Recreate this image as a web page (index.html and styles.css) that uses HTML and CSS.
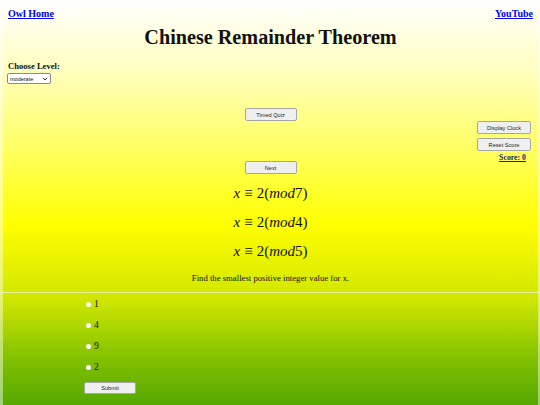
FILE: index.html
```html
<!DOCTYPE html>
<html>
<head>
<meta charset="utf-8">
<link rel="stylesheet" href="styles.css">
</head>
<body>
<div class="page">
  <div class="topbar">
    <a href="#" class="toplink">Owl Home</a>
    <a href="#" class="toplink">YouTube</a>
  </div>
  <h1 class="title">Chinese Remainder Theorem</h1>
  <div class="level">
    <div class="level-label">Choose Level:</div>
    <div class="select"><span>moderate</span><svg width="6" height="4" viewBox="0 0 6 4"><path d="M0.8 0.8 L3 3 L5.2 0.8" fill="none" stroke="#333" stroke-width="1"/></svg></div>
  </div>
  <div class="controls">
    <div class="side"></div>
    <div class="center">
      <button class="btn">Timed Quiz</button>
      <button class="btn next">Next</button>
    </div>
    <div class="side right">
      <button class="btn">Display Clock</button>
      <button class="btn">Reset Score</button>
      <a href="#" class="score">Score: 0</a>
    </div>
  </div>
  <div class="math">
    <div class="eq"><i>x</i><span class="rel">≡</span>2(<i>mod</i>7)</div>
    <div class="eq"><i>x</i><span class="rel">≡</span>2(<i>mod</i>4)</div>
    <div class="eq"><i>x</i><span class="rel">≡</span>2(<i>mod</i>5)</div>
  </div>
  <p class="question">Find the smallest positive integer value for x.</p>
  <div class="rule"></div>
  <div class="answers">
    <label class="opt"><input type="radio" name="a"> 1</label>
    <label class="opt"><input type="radio" name="a"> 4</label>
    <label class="opt"><input type="radio" name="a"> 9</label>
    <label class="opt"><input type="radio" name="a"> 2</label>
    <button class="btn submit">Submit</button>
  </div>
</div>
</body>
</html>
```
FILE: styles.css
```css
html, body {
  margin: 0;
  padding: 0;
  height: 405px;
  overflow: hidden;
}
body {
  background: linear-gradient(to bottom, #ffffff 0px, #ffffc0 70px, #ffff60 150px, #ffff00 225px, #e8f200 262px, #cfe600 300px, #a8d400 330px, #80c000 360px, #55a800 405px);
  font-family: "Liberation Serif", serif;
  color: #111;
}
.page {
  height: 405px;
  margin: 0 2px 0 3px;
  box-shadow: -3px 0 0 rgba(255,255,255,0.45), 2px 0 0 rgba(255,255,255,0.45);
}
.topbar {
  display: flex;
  justify-content: space-between;
  padding: 8px 5px 0 5px;
  line-height: 12px;
}
.toplink {
  font-size: 10px;
  font-weight: bold;
  color: #0000ee;
}
.title {
  margin: 6px 0 0 0;
  text-align: center;
  font-size: 20.2px;
  line-height: 22px;
  font-weight: bold;
}
.level {
  margin-top: 12px;
  padding-left: 5px;
}
.level-label {
  font-size: 8.6px;
  font-weight: bold;
  line-height: 12px;
}
.select {
  margin-top: 1px;
  height: 9px;
  border: 1px solid #8a8a8a;
  border-radius: 2px;
  background: #fff;
  display: flex;
  align-items: center;
  justify-content: space-between;
  padding: 0 2px 0 2px;
  box-sizing: content-box;
  font-family: "Liberation Sans", sans-serif;
  font-size: 5.5px;
  margin-left: -1px;
  width: 38px;
}
.controls {
  display: grid;
  grid-template-columns: 1fr 52px 1fr;
  margin-top: 24px;
}
.center {
  display: flex;
  flex-direction: column;
}
.btn {
  display: block;
  width: 52px;
  height: 13px;
  padding: 0;
  background: #efefef;
  border: 1px solid #a6a6a6;
  border-radius: 2px;
  font-family: "Liberation Sans", sans-serif;
  font-size: 5.6px;
  color: #222;
  box-sizing: border-box;
}
.next {
  margin-top: 40px;
}
.right {
  display: flex;
  flex-direction: column;
  align-items: flex-end;
  padding-top: 13px;
  padding-right: 7px;
  gap: 4px;
}
.right .btn {
  width: 54px;
}
.score {
  font-size: 7.8px;
  font-weight: bold;
  color: #1c1c6e;
  line-height: 10px;
  margin-right: 5px;
  margin-top: -2px;
}
.math {
  margin-top: 10px;
  display: flex;
  flex-direction: column;
  align-items: center;
  gap: 11px;
}
.eq {
  font-size: 15px;
  line-height: 18px;
  white-space: nowrap;
}
.eq i {
  font-style: italic;
}
.rel {
  margin: 0 4px;
}
.question {
  margin: 13px 0 0 0;
  text-align: center;
  font-size: 8.7px;
  line-height: 10px;
}
.rule {
  margin-top: 9px;
  height: 1px;
  background: rgba(240, 240, 200, 0.8);
  margin-left: -3px;
  margin-right: -2px;
}
.answers {
  padding-left: 80px;
  display: flex;
  flex-direction: column;
  align-items: flex-start;
  padding-top: 5px;
}
.opt {
  display: flex;
  font-size: 9.6px;
  line-height: 11px;
  height: 21px;
  align-items: flex-start;
}
.opt input {
  appearance: none;
  -webkit-appearance: none;
  width: 5px;
  height: 5px;
  border-radius: 50%;
  background: #fff;
  margin: 3.5px 3px 0 3px;
  border: none;
}
.submit {
  margin-top: 0px;
  width: 52px;
  height: 12px;
  margin-left: 1px;
}
```
